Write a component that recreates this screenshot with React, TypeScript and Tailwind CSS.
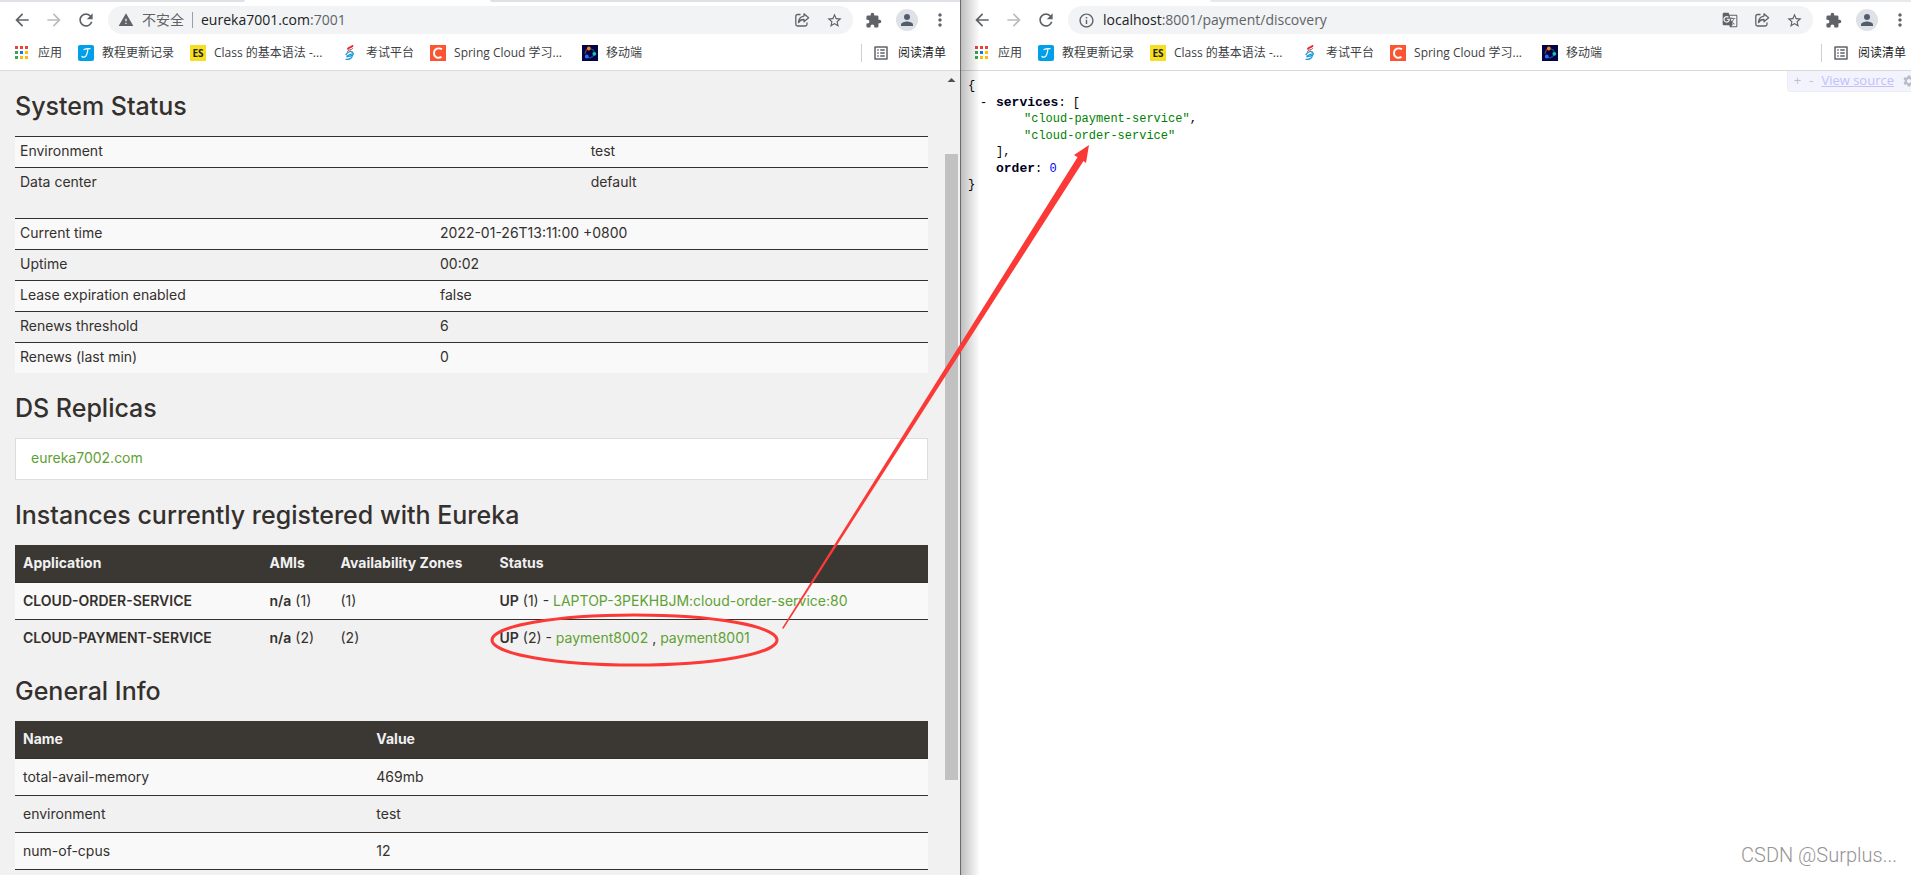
import type { ReactNode } from "react";
import {
  MdArrowBack,
  MdArrowForward,
  MdGTranslate,
  MdInfoOutline,
  MdListAlt,
  MdMoreVert,
  MdRefresh,
  MdSettings,
  MdStarBorder,
  MdWarning,
} from "react-icons/md";

// ---- Favicons ----
function AppsIcon() {
  const colors = ["#ea4335", "#ea4335", "#ea4335", "#34a853", "#1a73e8", "#fbbc04", "#34a853", "#fbbc04", "#fbbc04"];
  return (
    <svg width="16" height="16" viewBox="0 0 16 16" shapeRendering="crispEdges">
      {colors.map((c, i) => (
        <rect key={i} x={1 + (i % 3) * 5} y={1 + Math.floor(i / 3) * 5} width="3" height="3" fill={c} />
      ))}
    </svg>
  );
}

function TutorialIcon() {
  return (
    <svg width="16" height="16" viewBox="0 0 16 16">
      <rect width="16" height="16" rx="2" fill="#009fe9" />
      <path d="M6 4.500c1.600-.9 3.700-1 6-.9M10 3.800c-.3 3-.9 5.400-2 7.100-1 1.400-2.800 1.700-4 .6" fill="none" stroke="#fff" strokeWidth="1.300" strokeLinecap="round" />
    </svg>
  );
}

function EsIcon() {
  return (
    <span className="flex size-4 items-center justify-center bg-[#f7df1e] font-['Open_Sans',sans-serif] text-[10px] font-bold leading-4 text-[#222]">
      ES
    </span>
  );
}

function ExamIcon() {
  return (
    <svg width="16" height="16" viewBox="0 0 16 16" fill="none" strokeLinecap="round">
      <path d="M6 3.800C7 2 9 2.800 10.500 .9" stroke="#e3262b" strokeWidth="1.800" />
      <path d="M5.500 6.300C7 4.300 9 5.400 10.500 3.800" stroke="#e3262b" strokeWidth="1" />
      <path d="M4 9.500C6 5.700 10 6 11 8s-3 4.200-6 3" stroke="#1a9bd7" strokeWidth="1.400" />
      <path d="M4 14.300c3 .5 6-1 6.500-4M5 12c1.500-2.300 3-3 5-2.800" stroke="#1a9bd7" strokeWidth="1.200" />
    </svg>
  );
}

function CsdnIcon() {
  return (
    <svg width="16" height="16" viewBox="0 0 16 16">
      <rect width="16" height="16" fill="#fc5531" />
      <path d="M12 4.300C9.200 2.500 4.200 3.200 4 8c-.1 4.500 4.200 5.600 7.500 3.900" fill="none" stroke="#fff" strokeWidth="1.900" />
    </svg>
  );
}

function MobileIcon() {
  return (
    <svg width="16" height="16" viewBox="0 0 16 16">
      <rect width="16" height="16" fill="#020245" />
      <path d="M3.500 9A4.800 4.800 0 0 1 6 3.800" fill="none" stroke="#5c3a4c" strokeWidth="1.400" />
      <path d="M9 3.800A4.800 4.800 0 0 1 12.500 8" fill="none" stroke="#14466a" strokeWidth="1.400" />
      <path d="M5 12a5 5 0 0 0 7-2" fill="none" stroke="#1d3f9a" strokeWidth="1.400" />
      <circle cx="6.800" cy="3.500" r="1.900" fill="#ff7a1f" />
      <circle cx="12.300" cy="8.800" r="1.900" fill="#13c8a8" />
      <circle cx="4.800" cy="11.500" r="1.900" fill="#2f6ff0" />
    </svg>
  );
}

function ShareIcon() {
  return (
    <svg width="16" height="16" viewBox="0 0 16 16" fill="none" stroke="#5f6368" strokeWidth="1.300" strokeLinejoin="round">
      <path d="M6.500 2.500H3.600c-1 0-1.800.8-1.800 1.800v7.900c0 1 .8 1.800 1.800 1.800h7.600c1 0 1.800-.8 1.800-1.800v-1.700" />
      <path d="M10 1.800l4.600 4-4.600 4V7.500C7.300 7.400 5.700 8.400 4.500 10.600 4.800 7 6.600 4.500 10 4.100z" />
    </svg>
  );
}

function PuzzleIcon() {
  return (
    <svg width="17" height="17" viewBox="0 0 24 24" fill="currentColor">
      <path d="M20.500 11H19V7a2 2 0 0 0-2-2h-4V3.500a2.500 2.500 0 0 0-5 0V5H4a2 2 0 0 0-2 2v3.800h1.500a2.700 2.700 0 0 1 0 5.400H2V20a2 2 0 0 0 2 2h3.800v-1.500a2.700 2.700 0 0 1 5.400 0V22H17a2 2 0 0 0 2-2v-4h1.500a2.500 2.500 0 0 0 0-5z" />
    </svg>
  );
}

function PersonIcon() {
  return (
    <svg width="18" height="18" viewBox="0 0 24 24" fill="currentColor">
      <circle cx="12" cy="8" r="4" />
      <path d="M12 14c-2.700 0-8 1.300-8 4v2h16v-2c0-2.700-5.300-4-8-4z" />
    </svg>
  );
}

// ---- Browser chrome ----
const bookmarks: { label: string; icon: ReactNode; labelClass: string }[] = [
  { label: "应用", icon: <AppsIcon />, labelClass: "" },
  { label: "教程更新记录", icon: <TutorialIcon />, labelClass: "" },
  { label: "Class 的基本语法 -...", icon: <EsIcon />, labelClass: "w-28" },
  { label: "考试平台", icon: <ExamIcon />, labelClass: "" },
  { label: "Spring Cloud 学习...", icon: <CsdnIcon />, labelClass: "w-28" },
  { label: "移动端", icon: <MobileIcon />, labelClass: "" },
];

interface BrowserProps {
  tabStrip: ReactNode;
  address: ReactNode;
  translate?: boolean;
  children: ReactNode;
}

function Browser({ tabStrip, address, translate, children }: BrowserProps) {
  return (
    <div className="flex h-full min-w-0 flex-col bg-white font-['Open_Sans','Noto_Sans_CJK_SC',sans-serif]">
      <div className="flex h-0.5 shrink-0">{tabStrip}</div>
      <div className="flex h-9 shrink-0 items-center pl-3 pr-2.5 text-[#5f6368]">
        <div className="flex items-center gap-3">
          <button aria-label="Back"><MdArrowBack size={20} /></button>
          <button aria-label="Forward" className="text-[#babcbe]"><MdArrowForward size={20} /></button>
          <button aria-label="Reload"><MdRefresh size={20} /></button>
        </div>
        <div className="ml-3 flex h-7 min-w-0 flex-1 items-center rounded-full bg-[#f1f3f4] pl-2.5 pr-2.5">
          <div className="flex flex-1 items-center whitespace-nowrap text-sm">{address}</div>
          <div className="flex items-center gap-4">
            {translate && <button aria-label="Translate"><MdGTranslate size={16} /></button>}
            <button aria-label="Share"><ShareIcon /></button>
            <button aria-label="Bookmark"><MdStarBorder size={17} /></button>
          </div>
        </div>
        <button aria-label="Extensions" className="ml-3"><PuzzleIcon /></button>
        <button aria-label="Profile" className="ml-3.5 flex size-[22px] items-center justify-center rounded-full bg-[#dee1e6] text-[#515c70]">
          <PersonIcon />
        </button>
        <button aria-label="Menu" className="ml-3"><MdMoreVert size={20} /></button>
      </div>
      <div className="flex h-[33px] shrink-0 items-center gap-4 border-b border-[#d9dadc] pb-0.5 pl-3.5 pr-3.5 text-xs text-[#3c4043]">
        {bookmarks.map((b) => (
          <a key={b.label} href="#" className="flex items-center gap-2 whitespace-nowrap">
            {b.icon}
            <span className={b.labelClass}>{b.label}</span>
          </a>
        ))}
        <div className="flex-1" />
        <button className="flex items-center gap-2 whitespace-nowrap border-l border-[#cdcfd2] pl-2.5 text-[#202124]">
          <MdListAlt size={18} className="text-[#5f6368]" />
          阅读清单
        </button>
      </div>
      {children}
    </div>
  );
}

// ---- Eureka dashboard ----
function Heading({ children }: { children: ReactNode }) {
  return <h1 className="mb-[15px] pt-5 text-[25px] font-medium leading-[30px]">{children}</h1>;
}

function StatusTable({ rows, keyWidth, className = "" }: { rows: [string, string][]; keyWidth: string; className?: string }) {
  return (
    <table className={`w-full table-fixed ${className}`}>
      <tbody>
        {rows.map(([k, v]) => (
          <tr key={k} className="border-t border-[#34302d] odd:bg-[#f9f9f9]">
            <td className={`${keyWidth} px-[5px] pb-1.5 pt-1 leading-5`}>{k}</td>
            <td className="px-[5px] pb-1.5 pt-1 leading-5">{v}</td>
          </tr>
        ))}
      </tbody>
    </table>
  );
}

const th = "border-b border-[#34302d] px-2 pb-[9px] pt-2 text-left font-bold leading-5";
const td = "px-2 py-2 leading-5";
const bodyRow = "border-t border-[#34302d] odd:bg-[#f9f9f9]";

const instances = [
  { app: "CLOUD-ORDER-SERVICE", count: 1, nodes: ["LAPTOP-3PEKHBJM:cloud-order-service:80"] },
  { app: "CLOUD-PAYMENT-SERVICE", count: 2, nodes: ["payment8002", "payment8001"] },
];

const generalInfo = [
  ["total-avail-memory", "469mb"],
  ["environment", "test"],
  ["num-of-cpus", "12"],
];

function Eureka() {
  return (
    <div className="flex min-h-0 flex-1 bg-[#f1f1f1] font-['Inter',sans-serif] text-sm text-[#34302d]">
      <div className="min-w-0 flex-1 overflow-hidden px-[15px]">
        <Heading>System Status</Heading>
        <StatusTable
          keyWidth="w-[62.5%]"
          className="mb-5"
          rows={[
            ["Environment", "test"],
            ["Data center", "default"],
          ]}
        />
        <StatusTable
          keyWidth="w-[46%]"
          rows={[
            ["Current time", "2022-01-26T13:11:00 +0800"],
            ["Uptime", "00:02"],
            ["Lease expiration enabled", "false"],
            ["Renews threshold", "6"],
            ["Renews (last min)", "0"],
          ]}
        />

        <Heading>DS Replicas</Heading>
        <ul>
          <li className="border border-[#ddd] bg-white px-[15px] pb-[11px] pt-[9px] leading-5">
            <a href="#" className="text-[#5fa134]">eureka7002.com</a>
          </li>
        </ul>

        <Heading>Instances currently registered with Eureka</Heading>
        <table className="w-full table-fixed">
          <thead>
            <tr className="bg-[#3b3733] text-[#f1f1f1]">
              <th className={`w-[27%] ${th}`}>Application</th>
              <th className={`w-[71px] ${th}`}>AMIs</th>
              <th className={`w-[159px] whitespace-nowrap ${th}`}>Availability Zones</th>
              <th className={th}>Status</th>
            </tr>
          </thead>
          <tbody>
            {instances.map((item) => (
              <tr key={item.app} className={bodyRow}>
                <td className={`${td} font-semibold`}>{item.app}</td>
                <td className={td}><b className="font-semibold">n/a</b> ({item.count})</td>
                <td className={td}>({item.count})</td>
                <td className={td}>
                  <b className="font-semibold">UP</b> ({item.count}) -{" "}
                  {item.nodes.map((n, i) => (
                    <span key={n}>
                      {i > 0 && " , "}
                      <a href="#" className="text-[#5fa134]">{n}</a>
                    </span>
                  ))}
                </td>
              </tr>
            ))}
          </tbody>
        </table>

        <Heading>General Info</Heading>
        <table className="w-full table-fixed border-b border-[#34302d]">
          <thead>
            <tr className="bg-[#3b3733] text-[#f1f1f1]">
              <th className={`w-[38.7%] ${th}`}>Name</th>
              <th className={th}>Value</th>
            </tr>
          </thead>
          <tbody>
            {generalInfo.map(([k, v]) => (
              <tr key={k} className={bodyRow}>
                <td className={td}>{k}</td>
                <td className={td}>{v}</td>
              </tr>
            ))}
          </tbody>
        </table>
      </div>
      {/* scrollbar */}
      <div className="flex w-[17px] shrink-0 flex-col px-0.5">
        <svg width="13" height="17" viewBox="0 0 13 17" className="shrink-0">
          <path d="M2.500 11L6.500 7L10.500 11z" fill="#505050" />
        </svg>
        <div className="h-[66px] shrink-0" />
        <div className="h-[626px] bg-[#c1c1c1]" />
      </div>
    </div>
  );
}

// ---- JSON viewer ----
function JsonView() {
  return (
    <div className="flex min-h-0 flex-1 items-start justify-between overflow-hidden">
      <pre className="pl-2 pt-[7px] font-['Liberation_Mono','Noto_Sans_CJK_SC',monospace] text-xs leading-4 text-black">
        <div>{"{"}</div>
        <div className="mt-px pl-7">
          <span className="-ml-4 inline-block w-4">-</span>
          <b className="text-[13px] text-[#000020]">services</b>: [
        </div>
        <ul className="space-y-px pl-14 text-[#008000]">
          <li>"cloud-payment-service"<span className="text-black">,</span></li>
          <li>"cloud-order-service"</li>
        </ul>
        <div className="pl-7">],</div>
        <div className="mt-px pl-7">
          <b className="text-[13px] text-[#000020]">order</b>: <span className="text-[#0000ff]">0</span>
        </div>
        <div>{"}"}</div>
      </pre>
      <div className="flex h-[21px] items-center gap-2 rounded-bl border-b border-l border-[#ededf5] bg-[#f3f3fd] pl-1.5 pr-1 text-[13px] text-[#bfbfc4]">
        <button>+</button>
        <button>-</button>
        <a href="#" className="text-[#c3c0fa] underline">View source</a>
        <button aria-label="Options"><MdSettings size={14} className="text-[#b8bcc8]" /></button>
      </div>
    </div>
  );
}

// Hand-drawn marks laid over both windows
function Annotations() {
  return (
    <svg width="1911" height="875" viewBox="0 0 1911 875" className="pointer-events-none absolute left-0 top-0">
      <ellipse cx="634.500" cy="640" rx="142.500" ry="25" fill="none" stroke="#fb3a38" strokeWidth="3" />
      <path d="M782 628.200L1077.500 157.300L1074 155L1089 145L1086 163L1083.500 161L783.500 628.700z" fill="#fb3a38" />
    </svg>
  );
}

export default function App() {
  return (
    <div className="relative h-screen overflow-hidden">
      <div className="-mr-[9px] grid h-full grid-cols-2">
        <Browser
          tabStrip={
            <>
              <div className="w-[245px] rounded-br bg-[#dee1e6]" />
              <div className="w-[245px]" />
              <div className="flex-1 rounded-bl bg-[#dee1e6]" />
            </>
          }
          address={
            <>
              <MdWarning size={16} className="mr-2" />
              <span>不安全</span>
              <span className="mx-2 h-4 border-l border-[#9aa0a6]" />
              <span><span className="text-[#202124]">eureka7001.com</span>:7001</span>
            </>
          }
        >
          <Eureka />
        </Browser>
        <div className="relative h-full min-w-0">
          <Browser
            translate
            tabStrip={
              <>
                <div className="w-[250px]" />
                <div className="flex-1 rounded-bl bg-[#e7eaed]" />
              </>
            }
            address={
              <>
                <MdInfoOutline size={17} className="mr-2" />
                <span><span className="text-[#202124]">localhost</span>:8001/payment/discovery</span>
              </>
            }
          >
            <JsonView />
          </Browser>
          <div className="pointer-events-none absolute inset-y-0 left-0 w-5 border-l border-[#6b6b6b] bg-gradient-to-r from-black/25 to-transparent" />
        </div>
      </div>
      <Annotations />
      <div className="absolute bottom-2 right-3.5 font-['Roboto',sans-serif] text-xl font-light leading-6 text-[#949494]">
        CSDN @Surplus...
      </div>
    </div>
  );
}
